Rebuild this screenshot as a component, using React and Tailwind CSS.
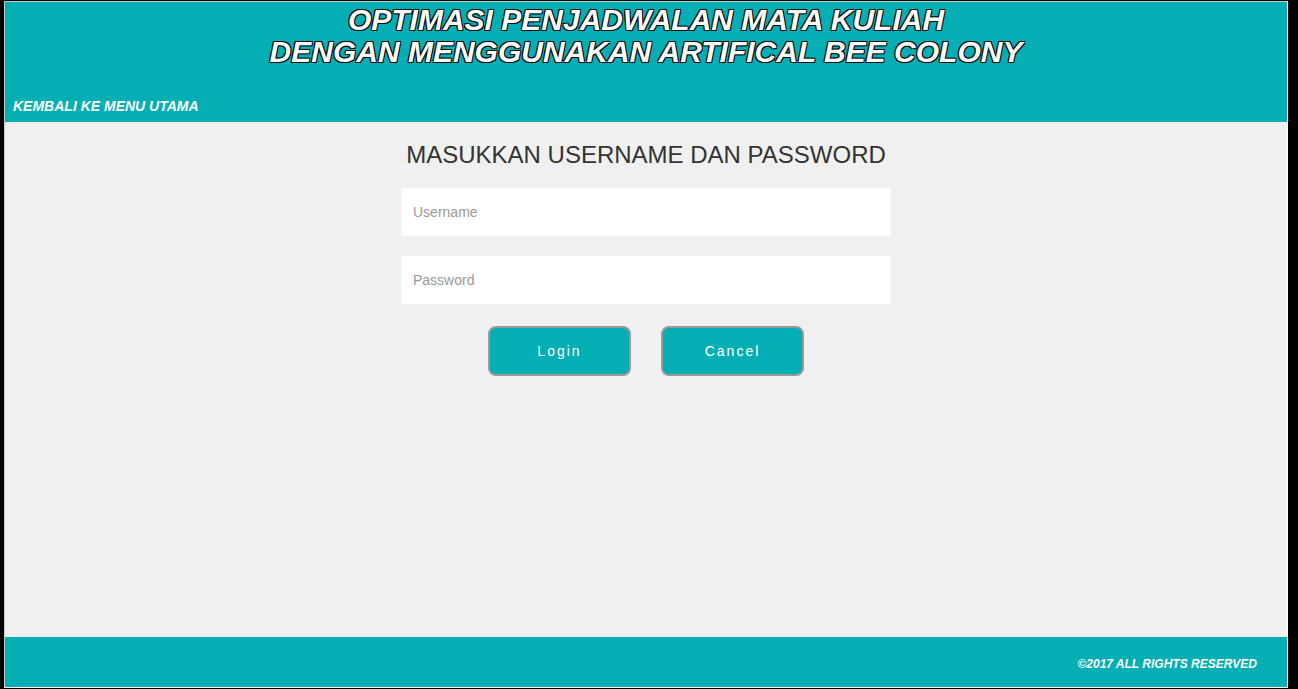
export default function App() {
  const outline = '[text-shadow:-1px_-1px_0_#000,1px_-1px_0_#000,-1px_1px_0_#000,1px_1px_0_#000]';

  return (
    <div className="h-[689px] w-[1298px] bg-black flex overflow-hidden font-['Liberation_Sans',Arial,sans-serif]">
      <div className="ml-[4px] mt-[1px] w-[1284px] h-[687px] flex flex-col border-l border-t border-[#c8c8c8] border-r border-r-white border-b border-b-white bg-[#f0f0f0]">
        {/* Header */}
        <header className="h-[120px] bg-[#03afb4] flex flex-col">
          <h1 className={`pt-[2px] text-center text-white font-bold italic text-[30px] leading-[32px] ${outline}`}>
            OPTIMASI PENJADWALAN MATA KULIAH
            <br />
            DENGAN MENGGUNAKAN ARTIFICAL BEE COLONY
          </h1>
          <a className="mt-auto mb-[8px] ml-[8px] text-white font-bold italic text-[14px] leading-[16px]">
            KEMBALI KE MENU UTAMA
          </a>
        </header>

        {/* Login form */}
        <main className="flex-1 flex flex-col items-center pt-[19px]">
          <h2 className="text-[24px] leading-[28px] text-[#333]">MASUKKAN USERNAME DAN PASSWORD</h2>
          <div className="mt-[19px] w-[490px] flex flex-col gap-[20px]">
            <input
              type="text"
              placeholder="Username"
              className="h-[48px] w-full bg-white px-[12px] text-[14px] text-[#333] placeholder:text-[#999] outline-none"
            />
            <input
              type="password"
              placeholder="Password"
              className="h-[48px] w-full bg-white px-[12px] text-[14px] text-[#333] placeholder:text-[#999] outline-none"
            />
          </div>
          <div className="mt-[22px] flex gap-[30px]">
            <button className="w-[143px] h-[50px] rounded-[8px] border-2 border-[#999] bg-[#03afb4] text-white text-[14px] tracking-[2px]">
              Login
            </button>
            <button className="w-[143px] h-[50px] rounded-[8px] border-2 border-[#999] bg-[#03afb4] text-white text-[14px] tracking-[2px]">
              Cancel
            </button>
          </div>
        </main>

        {/* Footer */}
        <footer className="h-[50px] bg-[#03afb4] flex items-center justify-end pr-[30px]">
          <span className="text-white font-bold italic text-[12px] pt-[4px]">©2017 ALL RIGHTS RESERVED</span>
        </footer>
      </div>
    </div>
  );
}
